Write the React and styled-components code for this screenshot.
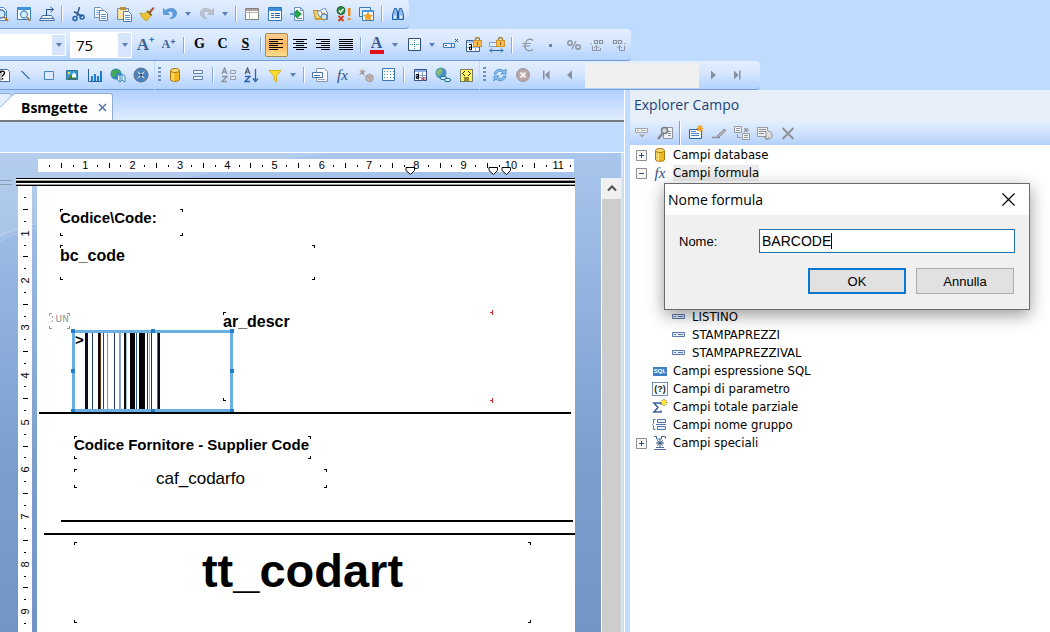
import { Fragment } from 'react'
import styled, { createGlobalStyle } from 'styled-components'

// ---------- icons, all drawn on a 16 x 16 grid ----------

const lock = (
    <>
        <path d="M9.500 4V2.500a2 2 0 0 1 4 0V4" fill="none" stroke="#a87a2a" strokeWidth="1.400" />
        <rect x="7.500" y="3.500" width="8" height="6" fill="#f9bd4f" stroke="#d0922f" />
        <path d="M11 5h1v3h-1z" fill="#8a5a14" />
    </>
)

const spark = <path d="M12 0v7M8.500 3.500h7M9.500 1l5 5M14.500 1l-5 5" stroke="#f0a21c" strokeWidth="1.200" fill="none" />

const lines = (widths) => widths.map((w, i) => (
    <path key={i} d={w} stroke="#000" strokeWidth="1" fill="none" />
))

const glyphs = {
    page: (
        <>
            <path d="M3.500 1.500h7l3 3v10h-10z" fill="#fff" stroke="#4f86c6" />
            <circle cx="8" cy="8" r="4" fill="#cfe8fb" stroke="#4479b4" strokeWidth="1.500" />
            <path d="M11 11l4 4" stroke="#c07c2c" strokeWidth="2" />
        </>
    ),
    preview: (
        <>
            <path d="M1.500 1.500h13v12h-13z" fill="#fff" stroke="#2f7ec4" />
            <path d="M1 1h14v3H1z" fill="#3f93d8" />
            <circle cx="8" cy="8.500" r="3.500" fill="#cdefff" stroke="#5993c6" strokeWidth="1.300" />
            <path d="M11 11l3 4" stroke="#b97a35" strokeWidth="2" />
        </>
    ),
    send: (
        <>
            <path d="M3.500 9.500h9l3 5h-15zM1 12.500h14" fill="#eef5fd" stroke="#4a6f9f" />
            <path d="M7.500 10V3.500H14M11.500 1l3 2.500-3 2.500" fill="none" stroke="#234f8c" />
        </>
    ),
    cut: (
        <>
            <path d="M9.500 1L7 10M4 5.500l8 5" stroke="#33588c" strokeWidth="1.500" fill="none" />
            <circle cx="5" cy="12.500" r="2" fill="none" stroke="#1f5fa8" strokeWidth="1.500" />
            <circle cx="12" cy="11" r="2" fill="none" stroke="#1f5fa8" strokeWidth="1.500" />
        </>
    ),
    copy: (
        <>
            <path d="M1.500 1.500h6l2 2v8h-8z" fill="#fff" stroke="#6f93bf" />
            <path d="M3 4.500h4M3 6.500h4M3 8.500h3" stroke="#8eb0da" />
            <path d="M6.500 4.500h5l3 3v7h-8z" fill="#fff" stroke="#5c83b4" />
            <path d="M8 8.500h5M8 10.500h5M8 12.500h5" stroke="#5d94d0" />
        </>
    ),
    paste: (
        <>
            <path d="M1.500 2.500h11v11h-11z" fill="#f7e3a6" stroke="#6c8db8" />
            <path d="M4 1h6v3H4z" fill="#b8923e" />
            <path d="M7.500 5.500h5l3 3v7h-8z" fill="#fff" stroke="#4b79b0" />
            <path d="M9 9.500h5M9 11.500h5M9 13.500h5" stroke="#5d94d0" />
        </>
    ),
    brush: (
        <>
            <path d="M9.500 6l4.500-5 1.500 1-4 5.500z" fill="#a8572c" />
            <path d="M1 7l4 1 4-3 3.500 3.500L11 11l-3.500 4-4-3z" fill="#f6cf3c" stroke="#b8901d" strokeWidth=".8" />
            <path d="M8 5l4.500 4.500" stroke="#6b5a2c" strokeWidth="1.500" />
            <path d="M4 9.500l4 4M6 8.500l3.500 3.500" stroke="#c49a20" strokeWidth=".8" />
        </>
    ),
    undo: <path d="M1.500 2.500v6h6L5.500 6.500c2-2 5.500-1.500 5.500 1.500 0 2-1 3.500-3 4.500 4 0 6.500-2 6.500-5.500 0-5-7-6-11-2.500z" fill="#5b9fe0" stroke="#3d7fc4" strokeWidth=".6" />,
    redo: <path d="M14.500 2.500v6h-6l2-2C8.500 4.500 5 5 5 8c0 2 1 3.500 3 4.500-4 0-6.500-2-6.500-5.500 0-5 7-6 11-2.500z" fill="#bcc3cc" stroke="#a0a8b3" strokeWidth=".6" />,
    panel: (
        <>
            <path d="M1.500 2.500h13v11h-13z" fill="#fff" stroke="#857f7b" />
            <path d="M2 3h12v2H2z" fill="#a9a4a0" />
            <path d="M5.500 5v9M1 6.500h14" stroke="#bcb8b5" />
        </>
    ),
    form: (
        <>
            <path d="M1.500 1.500h13v13h-13z" fill="#fff" stroke="#2f74ba" />
            <path d="M2 2h12v3H2z" fill="#3d8fd8" />
            <path d="M4 7.500h3M4 9.500h3M4 11.500h3M8 7.500h5M8 9.500h5M8 11.500h5" stroke="#3068b0" />
        </>
    ),
    exporter: (
        <>
            <path d="M4.500 1.500h6l3 3v10h-9z" fill="#fff" stroke="#6a92c2" />
            <path d="M10.500 1.500v3h3M7 12.500h5" stroke="#6a92c2" fill="none" />
            <path d="M7 4l4.500 4L7 12 3.500 8z" fill="#25a746" stroke="#157a30" strokeWidth=".7" />
            <path d="M0 8h5" stroke="#5a9bd8" strokeWidth="2" />
        </>
    ),
    folder: (
        <>
            <path d="M.5 4.500h5l2 2h7v7H2.500z" fill="#f2d26b" stroke="#b58a2c" />
            <path d="M4 6l8-4 3 6-8 3z" fill="#eef6ff" stroke="#6493c9" />
            <path d="M8 5l1 3 3-1" stroke="#d8742c" fill="none" />
            <circle cx="11" cy="11" r="3" fill="#cfe7fa" stroke="#4879b1" />
            <path d="M2 12h8v2H2z" fill="#c99b35" />
        </>
    ),
    checks: (
        <>
            <circle cx="5" cy="4.500" r="4" fill="#2f8d45" stroke="#1e6430" />
            <path d="M3 4.500l1.500 2L7.500 3" stroke="#fff" strokeWidth="1.300" fill="none" />
            <path d="M2.500 10l5 5M7.500 10l-5 5" stroke="#d23a16" strokeWidth="1.800" />
            <path d="M12 2h2.500v8H12zM12 12h2.500v2H12z" fill="#e88a1b" />
        </>
    ),
    favorite: (
        <>
            <path d="M.5 1.500h11v9H.5z" fill="#dcedff" stroke="#3579be" />
            <path d="M3.500 4.500h11v10h-11z" fill="#fff" stroke="#3579be" />
            <path d="M3 4h12v2H3z" fill="#4b97dd" />
            <path d="M9 6l1.300 3 3.200.3-2.400 2 .7 3.200L9 12.800l-2.800 1.700.7-3.200-2.400-2L7.700 9z" fill="#f7a823" stroke="#d27f12" strokeWidth=".6" />
        </>
    ),
    binoculars: (
        <>
            <path d="M4.500 2.500h2l1 4v7h-5V9zM11.500 2.500h-2l-1 4v7h5V9z" fill="#8fbdec" stroke="#1f5fae" />
            <path d="M4 9.500h2v3H4zM10 9.500h2v3h-2z" fill="#e2effc" />
            <path d="M7 6.500h2" stroke="#1d4f92" strokeWidth="2" />
        </>
    ),
    alignLeft: lines(['M0 2.500h14', 'M0 4.500h9', 'M0 6.500h14', 'M0 8.500h9', 'M0 10.500h14', 'M0 12.500h9']),
    alignCenter: lines(['M1 2.500h14', 'M4 4.500h8', 'M1 6.500h14', 'M4 8.500h8', 'M1 10.500h14', 'M4 12.500h8']),
    alignRight: lines(['M1 2.500h14', 'M6 4.500h9', 'M1 6.500h14', 'M6 8.500h9', 'M1 10.500h14', 'M6 12.500h9']),
    justify: lines(['M1 2.500h14', 'M1 4.500h14', 'M1 6.500h14', 'M1 8.500h14', 'M1 10.500h14', 'M1 12.500h14']),
    borders: (
        <>
            <path d="M2.500 1.500h12v12h-12z" fill="#fff" stroke="#2c4c80" />
            <path d="M8.500 3v10M4 7.500h9" stroke="#2f8a9e" strokeDasharray="1 1" />
        </>
    ),
    fieldX: (
        <>
            <path d="M.5 6.500h11v4H.5zM2 8.500h2" fill="#e7f1fd" stroke="#3f7cbd" />
            <path d="M8.500 7v3" stroke="#3f7cbd" />
            <path d="M12 2l3 3M15 2l-3 3" stroke="#244a80" />
        </>
    ),
    lockField: (
        <>
            <path d="M.5 3.500h13v11H.5z" fill="#fff" stroke="#3c5f92" />
            <path d="M5.500 4v10M9.500 4v10M1 10.500h12" stroke="#9db9dc" />
            <path d="M1 4h8v2H1z" fill="#a5c6f0" />
            <path d="M3 7.500h2.500v5H3.500v-2.500h2" fill="none" stroke="#000" />
            {lock}
        </>
    ),
    lockSize: (
        <>
            <path d="M.5 5.500h12v4H.5z" fill="#e1eefd" stroke="#7fa3d2" />
            <path d="M1 13.500h13M3 11.500l-2 2 2 2M12 11.500l2 2-2 2" stroke="#2a66a8" fill="none" />
            {lock}
        </>
    ),
    euro: <path d="M13 3.500C9 .5 5.500 3 5 8s4 7.500 8 4.500M2.500 6.500H11M2.500 9H10" fill="none" stroke="#8c929b" strokeWidth="1.200" />,
    point: <path d="M6 7h3v3H6z" fill="#7d838c" />,
    percent: (
        <>
            <circle cx="4" cy="6" r="2.200" fill="none" stroke="#8c929b" strokeWidth="1.500" />
            <circle cx="12" cy="10" r="2.200" fill="none" stroke="#8c929b" strokeWidth="1.500" />
            <path d="M10 4L6 12" stroke="#8c929b" strokeWidth="1.200" />
        </>
    ),
    decimalAdd: (
        <>
            <path d="M5.500 3.500h3v3h-3zM10.500 3.500h3v3h-3zM2 6v1.500" fill="none" stroke="#8f959e" strokeWidth="1.200" />
            <path d="M3.500 9v4.500h8V11M7.500 13V9M5 11l2.500-2.500L10 11" fill="none" stroke="#8f959e" />
        </>
    ),
    decimalDel: (
        <>
            <path d="M1.500 3.500h3v3h-3zM6.500 3.500h3v3h-3zM13 6v1.500" fill="none" stroke="#8f959e" strokeWidth="1.200" />
            <path d="M12.500 9v4.500h-5V9M5 11l2.500-2.500L10 11" fill="none" stroke="#8f959e" />
        </>
    ),
    textBox: (
        <>
            <path d="M3.500 2.500h9l2 2v10h-11z" fill="#fff" stroke="#4c6da0" />
            <path d="M0 4h6v9H0z" fill="#fff" stroke="#777" />
            <path d="M5.500 6c0-2.500 4-2.500 4 0 0 1.500-2 1.500-2 3.500M7.500 11v1.500" stroke="#000" strokeWidth="1.400" fill="none" />
        </>
    ),
    line: <path d="M3.500 4l8 8" stroke="#3c74b4" strokeWidth="1.300" />,
    box: <path d="M3.500 4.500h9v8h-9z" fill="#deebfd" stroke="#4a86c5" />,
    picture: (
        <>
            <path d="M2.500 3.500h11v9h-11z" fill="#3b9fd0" stroke="#2b6d9c" />
            <path d="M3 12l4-4 3 2 1-1 2 3z" fill="#3f7d38" />
            <path d="M8 7.500l2-2 2 2v3H8z" fill="#fff" />
            <path d="M4 5h2v2H4z" fill="#f4dd4f" />
        </>
    ),
    chart: (
        <>
            <path d="M1.500 2v12.500H15" stroke="#2c5d9b" fill="none" />
            <path d="M4 9h2v5H4zM7 7h2v7H7zM10 9h2v5h-2zM13 4h2v10h-2z" fill="#1f7bd6" />
        </>
    ),
    maps: (
        <>
            <circle cx="6" cy="7" r="5.500" fill="#2f86c4" />
            <path d="M2 4l4-2 2 2-2 4-2 3-3-3zM7 2l4 3-2 2z" fill="#46a85a" />
            <path d="M7.500 7l2.500 2 2-2 3 2v6l-3-2-2 2-2.500-2z" fill="#e8f4fd" stroke="#3c8dc0" />
            <path d="M10 9v6M12 7v6" stroke="#3c8dc0" />
        </>
    ),
    compass: (
        <>
            <circle cx="8" cy="8" r="7" fill="#4583c2" stroke="#5d6f88" />
            <path d="M3 3l5 3.500L13 3l-3.500 5 3.500 5-5-3.500L3 13l3.500-5z" fill="#f0f4f9" stroke="#5b6a7c" strokeWidth=".5" />
            <circle cx="8" cy="8" r="1.500" fill="#2b4f7c" />
        </>
    ),
    database: (
        <>
            <path d="M3.500 3.500v9c0 2.500 9 2.500 9 0v-9z" fill="#f0b921" stroke="#a67710" />
            <path d="M5 5v8M6.500 5v9" stroke="#fae38c" />
            <ellipse cx="8" cy="3.500" rx="4.500" ry="2" fill="#fbdf74" stroke="#a67710" />
        </>
    ),
    group: (
        <>
            <path d="M3.500 3.500h9v3h-9z" fill="#f3f8ff" stroke="#5c81ac" />
            <path d="M3.500 9.500h9v3h-9z" fill="#f3f8ff" stroke="#5c81ac" />
        </>
    ),
    sortGroup: (
        <>
            <path d="M1 7l2.500-6L6 7M2 5h3M1 9.500h5l-5 5h5" fill="none" stroke="#8b929c" strokeWidth="1.300" />
            <path d="M9.500 3.500h5v3h-5zM9.500 9.500h5v3h-5z" fill="#e5ebf3" stroke="#959ca6" />
        </>
    ),
    sort: (
        <>
            <path d="M1 7l2.500-6L6 7M2 5h3" fill="none" stroke="#5d6670" strokeWidth="1.300" />
            <path d="M1 9.500h5l-5 5h5" fill="none" stroke="#2b62a6" strokeWidth="1.300" />
            <path d="M11.500 2v12M9 11.500l2.500 3 2.500-3" fill="none" stroke="#2866b4" strokeWidth="1.300" />
        </>
    ),
    filter: <path d="M2 3.500h12L9.500 9v6L7 13V9z" fill="#fbdc2c" stroke="#d8b424" />,
    fieldPage: (
        <>
            <path d="M4.500 1.500h8l3 3v10h-11z" fill="#f4f8fd" stroke="#8797b4" />
            <path d="M.5 5.500h10v5H.5z" fill="#fff" stroke="#4b72ab" />
            <path d="M2 8.500h6" stroke="#4b72ab" />
            <path d="M6 12.500h7" stroke="#9aa8bf" />
        </>
    ),
    cube: (
        <>
            <path d="M4 1l1 3 3-1-2 3 1 3-3-2-3 1 2-3-2-2 3 .5z" fill="#a69b9d" />
            <path d="M8 9l4-2 3 2v4l-3 2-4-2z" fill="#c6b9b5" stroke="#a3989a" />
            <path d="M8 9l4 1.500L15 9M12 10.500V15" stroke="#a3989a" fill="none" />
        </>
    ),
    gridIcon: (
        <>
            <path d="M1.500 1.500h12v12h-12z" fill="#fff" stroke="#3b77ae" />
            <path d="M3 4.500h10M3 7.500h10M3 10.500h10" stroke="#3f8bb5" strokeDasharray="1 2" />
        </>
    ),
    crossTab: (
        <>
            <path d="M2.500 2.500h12v11h-12z" fill="#fff" stroke="#3a4f86" />
            <path d="M3 3h11v2H3z" fill="#8fb6ec" />
            <path d="M6.500 3v10M10.500 3v10M3 8.500h11M3 10.500h11" stroke="#8da3cb" />
            <path d="M4 7.500h2.500v4H4.500v-2h2" fill="none" stroke="#000" />
            <path d="M9 12h5M11.500 10v4" stroke="#e03b32" />
        </>
    ),
    webLink: (
        <>
            <circle cx="6" cy="6" r="5.500" fill="#4c8fc9" />
            <path d="M1 5l4-4 3 2-3 5-2 1z" fill="#86c06f" />
            <rect x="5.500" y="9.500" width="6" height="3" rx="1.500" fill="#d8f0f7" stroke="#1e6d8c" />
            <rect x="9.500" y="11.500" width="6" height="3" rx="1.500" fill="#d8f0f7" stroke="#1e6d8c" />
        </>
    ),
    highlight: (
        <>
            <path d="M2.500 2.500h12v12h-12z" fill="#fff25c" stroke="#111" strokeDasharray="1 1" />
            <path d="M7 4L4.500 6.500 7 9M10 4l2.500 2.500L10 9M6 11h5M6 13h5" fill="none" stroke="#2c2508" />
        </>
    ),
    refresh: (
        <>
            <path d="M2 7c1-5 7-6 10-3l2-2v5H9l2-1.500C8 3 5 4.500 4.500 7z" fill="#8cc6f2" stroke="#3f87c5" strokeWidth=".8" />
            <path d="M14 9c-1 5-7 6-10 3l-2 2V9h5l-2 1.500C8 13 11 11.500 11.500 9z" fill="#8cc6f2" stroke="#3f87c5" strokeWidth=".8" />
        </>
    ),
    stop: (
        <>
            <circle cx="8" cy="8" r="6.500" fill="#b9a6a6" stroke="#a39293" />
            <path d="M5.500 5.500l5 5M10.500 5.500l-5 5" stroke="#f6f0f0" strokeWidth="2" />
        </>
    ),
    first: <path d="M5 3.500h1.500v9H5zM11.500 3.500v9L7 8z" fill="#8790a0" />,
    prev: <path d="M11 3.500v9L6 8z" fill="#8790a0" />,
    next: <path d="M6 3.500v9L11 8z" fill="#8790a0" />,
    last: <path d="M11 3.500h1.500v9H11zM6 3.500v9l4.500-4.500z" fill="#8790a0" />,
    // explorer panel
    insertField: (
        <>
            <path d="M1.500 3.500h12v4h-12zM3 5.500h2M7 5.500h5" fill="#f1f1f1" stroke="#a0a3a8" />
            <path d="M5 9.500h6l-3 3z" fill="#a0a3a8" />
        </>
    ),
    browse: (
        <>
            <path d="M6.500 2.500h9v11h-9zM11 6.500h3M11 8.500h3M11 10.500h3" fill="#f0f0f0" stroke="#8f9297" />
            <circle cx="7.500" cy="5.500" r="3" fill="#d5d9de" stroke="#777a80" strokeWidth="1.500" />
            <path d="M6 8l-5 6" stroke="#85888d" strokeWidth="2.500" />
        </>
    ),
    newField: (
        <>
            <path d="M1.500 4.500h12v9h-12z" fill="#fff" stroke="#2f62a4" />
            <path d="M3 6.500h5M3 8.500h8M3 10.500h8" stroke="#4682c8" />
            {spark}
        </>
    ),
    edit: (
        <>
            <path d="M7 10l6-6 2 1.500-6 6-3 1z" fill="#b3b5b8" stroke="#8c8f94" />
            <path d="M1 12.500h8" stroke="#8c8f94" strokeWidth="1.500" />
        </>
    ),
    duplicate: (
        <>
            <path d="M.5 1.500h7v6h-7zM2 3.500h4M2 5.500h4" fill="#f2f2f2" stroke="#95989d" />
            <path d="M8.500 8.500h7v6h-7zM10 10.500h4M10 12.500h4" fill="#f2f2f2" stroke="#95989d" />
            <path d="M3.500 9v3.500H7M12 3v4M10 5h5M10 3l4 4M14 3l-4 4" fill="none" stroke="#95989d" />
        </>
    ),
    rename: (
        <>
            <path d="M.5 2.500h10v9H.5z" fill="#ededed" stroke="#95989d" />
            <path d="M2 4.500h7M2 6.500h7M2 8.500h5" stroke="#8e9196" />
            <path d="M9 6v8c4 1 6-1 6-4s-2-4-4-4M7 12l3 3 2-3" fill="#ddd" stroke="#8e9196" />
        </>
    ),
    remove: <path d="M2.500 3l11 11M13.500 3l-11 11" stroke="#8e9196" strokeWidth="1.800" />,
    // tree rows
    field: (
        <>
            <path d="M1.500 5.500h12v4h-12z" fill="#e9f0fb" stroke="#5a79ad" />
            <path d="M3 7.500h2M7 7.500h5" stroke="#5a79ad" />
        </>
    ),
    runningTotal: (
        <>
            <path d="M9 5.500V4H2l4 4.500L2 13h7v-1.500" fill="none" stroke="#3e62a0" strokeWidth="1.600" />
            <path d="M12 0v7M8.500 3.500h7M9.500 1l5 5M14.500 1l-5 5" stroke="#6b6214" />
            <circle cx="12" cy="3.500" r="2.500" fill="#ffe72f" />
        </>
    ),
    groupName: (
        <>
            <path d="M3.500 2.500h-2v4l-1 1 1 1v4h2" fill="none" stroke="#5477ab" />
            <path d="M5.500 2.500h8v3h-8zM5.500 9.500h8v3h-8z" fill="#e9f0fb" stroke="#5477ab" />
            <path d="M4 7.500h10" stroke="#5477ab" />
        </>
    ),
    special: (
        <>
            <path d="M2 1.500h3M4.500 1v3h5V1M9.500 1.500h4v2M2 14.500h12M4 12.500h8" fill="none" stroke="#4c6f9f" />
            <path d="M8 4v8M4 8h8M5 5.500l6 5M11 5.500l-6 5" stroke="#2d527f" />
        </>
    ),
}

function Icon({ name }) {
    return <Glyph viewBox="0 0 16 16" aria-hidden="true">{glyphs[name]}</Glyph>
}

function Caret() {
    return <CaretGlyph viewBox="0 0 6 4" aria-hidden="true"><path d="M0 0h6L3 4z" /></CaretGlyph>
}

// one entry of a toolbar: '|' separator, 'v' drop arrow, string icon, or its own node
function Tools({ items }) {
    return items.map((item, i) => {
        if (item === '|') return <Separator key={i} />
        if (item === 'v') return <DropButton key={i} aria-label="Apri elenco"><Caret /></DropButton>
        if (typeof item === 'string') return <ToolButton key={i} aria-label={item}><Icon name={item} /></ToolButton>
        return <Fragment key={i}>{item}</Fragment>
    })
}

function Toolbars() {
    return (
        <header>
            <BarRow>
                <Bar $shift={-11} $round $end={0}>
                    <Tools items={['page', 'preview', 'send', '|', 'cut', 'copy', 'paste', 'brush', 'undo', 'v', 'redo', 'v', '|',
                        'panel', 'form', 'exporter', 'folder', 'checks', 'favorite', '|', 'binoculars']} />
                </Bar>
            </BarRow>
            <BarRow>
                <Bar $tall $round $end={0}>
                    <Combo $width={66}>
                        <select aria-label="Carattere" defaultValue=""><option value=""></option></select>
                        <ComboArrow><Caret /></ComboArrow>
                    </Combo>
                    <ComboGap />
                    <Combo $width={62} $tall>
                        <select aria-label="Dimensione" defaultValue="75"><option>75</option></select>
                        <ComboArrow><Caret /></ComboArrow>
                    </Combo>
                    <ComboGap $small />
                    <Tools items={[
                        <ToolButton aria-label="Ingrandisci"><SizeLetter $size={17}>A<sup>+</sup></SizeLetter></ToolButton>,
                        <ToolButton aria-label="Riduci"><SizeLetter $size={12}>A<sup>+</sup></SizeLetter></ToolButton>,
                        '|',
                        <ToolButton><StyleLetter as="b">G</StyleLetter></ToolButton>,
                        <ToolButton><StyleLetter as="i">C</StyleLetter></ToolButton>,
                        <ToolButton><StyleLetter as="u">S</StyleLetter></ToolButton>,
                        '|',
                        <ToolButton $active aria-label="Allinea a sinistra"><Icon name="alignLeft" /></ToolButton>,
                        'alignCenter', 'alignRight', 'justify', '|',
                        <ToolButton aria-label="Colore carattere"><ColorLetter>A</ColorLetter></ToolButton>,
                        'v', 'borders', 'v', 'fieldX', 'lockField', 'lockSize', '|',
                        'euro', 'point', 'percent', 'decimalAdd', 'decimalDel',
                    ]} />
                </Bar>
            </BarRow>
            <BarRow>
                <Bar $shift={-9} $end={2}>
                    <Tools items={['textBox', 'line', 'box', 'picture', 'chart', 'maps', 'compass']} />
                </Bar>
                <Bar $end={2}>
                    <Grip />
                    <Tools items={['database', 'group', '|', 'sortGroup', 'sort', 'filter', 'v', '|', 'fieldPage',
                        <ToolButton aria-label="Formula"><Fx>fx</Fx></ToolButton>,
                        'cube', 'gridIcon', '|', 'crossTab', 'webLink', 'highlight']} />
                </Bar>
                <Bar $round $end={13}>
                    <Grip />
                    <Tools items={['refresh', 'stop', 'first', 'prev']} />
                    <PageBox aria-label="Pagina" readOnly />
                    <Tools items={['next', 'last']} />
                </Bar>
            </BarRow>
        </header>
    )
}

function Ruler({ vertical, count }) {
    return (
        <RulerTrack $vertical={vertical} $count={count}>
            {Array.from({ length: count }, (_, i) => {
                const n = i + 1
                if (n % 4 === 0) return <RulerNumber key={n} $vertical={vertical}>{n / 4}</RulerNumber>
                return <RulerTick key={n} $vertical={vertical} $long={n % 4 === 2} />
            })}
        </RulerTrack>
    )
}

// [x, width, colour]
const bars = [
    [0, 3, '#0c0c1e'], [7, 1, '#27406b'], [13, 2, '#140606'], [15, 1, '#5a2f20'], [18, 1, '#2f3f63'], [22, 1, '#6d9ac4'],
    [29, 1, '#22355c'], [34, 1, '#c09868'], [35, 1, '#8ba9cc'], [39, 2, '#140c08'], [41, 1, '#a8c4dc'], [45, 5, '#050308'], [51, 1, '#2a5c80'],
    [54, 6, '#050308'], [62, 1, '#1b2f52'], [64, 1, '#9fb4c4'], [66, 1, '#3c2c40'], [72, 1, '#8a5a30'], [73, 2, '#06081a'],
]

const pins = [372, 455, 468]

const corners = ['tl', 'tr', 'bl', 'br']

function Field({ at, show = corners, children, ...rest }) {
    return (
        <FieldBox $at={at} {...rest}>
            {show.map(c => <Corner key={c} $side={c} />)}
            {children}
        </FieldBox>
    )
}

function Report() {
    return (
        <Paper>
            <Field at={[23, 23, 123, 27]}>Codice\Code:</Field>
            <Field at={[23, 59, 255, 35]} $size={16} $pad={2}>bc_code</Field>
            <Field at={[12, 127, 21, 16]} $muted>:UN</Field>
            <Field at={[186, 126, 269, 89]} $size={16} $pad={1} show={['tl', 'bl']}>
                ar_descr
                <RedMark $top /><RedMark />
            </Field>

            <Selection>
                <Start>&gt;</Start>
                <svg width="75" height="76" aria-hidden="true" shapeRendering="crispEdges">
                    {bars.map(([x, w, color]) => <rect key={x} x={x} width={w} height="76" fill={color} />)}
                </svg>
                {[0, 50, 100].map(x => [0, 50, 100].map(y => (
                    x === 50 && y === 50 ? null : <Handle key={`${x}-${y}`} $x={x} $y={y} />
                )))}
            </Selection>

            <Rule $at={[2, 226, 532]} />
            <Field at={[37, 250, 237, 23]}>Codice Fornitore - Supplier Code</Field>
            <Field at={[37, 283, 253, 19]} $size={17} $weight={400} $center>caf_codarfo</Field>
            <Rule $at={[24, 334, 512]} />
            <Rule $at={[7, 347, 531]} />
            <Field at={[37, 356, 457, 81]} $size={47} $center $pad={1}>tt_codart</Field>
        </Paper>
    )
}

function Designer() {
    return (
        <DesignerPane>
            <TabStrip>
                <TabEdge width="15" height="27" viewBox="0 0 15 27" aria-hidden="true">
                    <path d="M0 1h9l3 2v24H0z" fill="#e3eefd" />
                    <path d="M0 .5h9l3 2" fill="none" stroke="#90add3" />
                    <path d="M0 14.500L13 1.500l2-1.500v27H0z" fill="#fff" />
                    <path d="M0 14.500L12.500 2l2.500-1.500" fill="none" stroke="#90add3" />
                </TabEdge>
                <Tab>
                    Bsmgette
                    <TabClose aria-label="Chiudi">
                        <svg width="9" height="9" viewBox="0 0 9 9"><path d="M1 1l7 7M8 1l-7 7" stroke="#5174a8" strokeWidth="1.500" /></svg>
                    </TabClose>
                </Tab>
            </TabStrip>
            <SubBand />
            <Workspace>
                <Swoosh viewBox="0 0 622 480" preserveAspectRatio="none" aria-hidden="true">
                    <path d="M0 0h330C220 14 90 42 0 86z" fill="#fff" opacity=".14" />
                    <path d="M0 82Q20 74 40 70M0 88Q18 78 40 74" stroke="#cfe0f5" fill="none" opacity=".5" />
                </Swoosh>
                <TopRuler>
                    <Ruler count={45} />
                    {pins.map(x => (
                        <Pin key={x} $x={x} viewBox="0 0 11 9" aria-hidden="true">
                            <path d="M1 1.500h8.500v3l-4 4-4.500-4z" fill="#fff" stroke="#000" />
                        </Pin>
                    ))}
                </TopRuler>
                <Scroller>
                    <Sheet>
                        <SectionTop><SectionMark /><SectionRule /></SectionTop>
                        <SheetBody>
                            <SideRuler><Ruler vertical count={38} /></SideRuler>
                            <Report />
                        </SheetBody>
                    </Sheet>
                    <Scrollbar>
                        <ScrollUp aria-label="Scorri in alto">
                            <svg width="10" height="7" viewBox="0 0 10 7"><path d="M1 5.500l4-4 4 4" fill="none" stroke="#505050" strokeWidth="2" /></svg>
                        </ScrollUp>
                    </Scrollbar>
                </Scroller>
            </Workspace>
        </DesignerPane>
    )
}

function Expander({ open }) {
    return (
        <ExpandButton aria-label={open ? 'Comprimi' : 'Espandi'}>
            <svg width="11" height="11" viewBox="0 0 11 11">
                <path d="M.5.5h10v10H.5z" fill="#f7f7f7" stroke="#8f8f8f" />
                <path d={open ? 'M3 5.500h5' : 'M3 5.500h5M5.500 3v5'} stroke="#2e4a80" />
            </svg>
        </ExpandButton>
    )
}

function SqlBadge() {
    return <Badge>SQL</Badge>
}

function ParamBadge() {
    return <Badge $framed>(?)</Badge>
}

const formulas = ['LISTINO', 'STAMPAPREZZI', 'STAMPAPREZZIVAL']

const groups = [
    { label: 'Campi espressione SQL', icon: <SqlBadge /> },
    { label: 'Campi di parametro', icon: <ParamBadge /> },
    { label: 'Campi totale parziale', icon: <Icon name="runningTotal" /> },
    { label: 'Campi nome gruppo', icon: <Icon name="groupName" /> },
    { label: 'Campi speciali', icon: <Icon name="special" />, closed: true },
]

function FieldExplorer() {
    return (
        <ExplorerPane>
            <ExplorerTitle>Explorer Campo</ExplorerTitle>
            <ExplorerBar>
                <Tools items={['insertField', 'browse', '|', 'newField', 'edit', 'duplicate', 'rename', 'remove']} />
            </ExplorerBar>
            <Tree>
                <TreeRow>
                    <Expander />
                    <TreeIcon><Icon name="database" /></TreeIcon>
                    <span>Campi database</span>
                </TreeRow>
                <TreeRow>
                    <Expander open />
                    <TreeIcon><Fx>fx</Fx></TreeIcon>
                    <Selected>Campi formula</Selected>
                </TreeRow>
                <Children>
                    {formulas.map(name => (
                        <TreeRow key={name} $child>
                            <TreeIcon><Icon name="field" /></TreeIcon>
                            <span>{name}</span>
                        </TreeRow>
                    ))}
                </Children>
                {groups.map(({ label, icon, closed }) => (
                    <TreeRow key={label}>
                        {closed ? <Expander /> : <ExpandSpace />}
                        <TreeIcon>{icon}</TreeIcon>
                        <span>{label}</span>
                    </TreeRow>
                ))}
            </Tree>
            <FormulaDialog />
        </ExplorerPane>
    )
}

function FormulaDialog() {
    return (
        <Dialog role="dialog" aria-labelledby="dialog-title">
            <DialogTitle>
                <span id="dialog-title">Nome formula</span>
                <CloseButton aria-label="Chiudi">
                    <svg width="13" height="13" viewBox="0 0 13 13"><path d="M.5.5l12 12M12.500.5l-12 12" stroke="#000" strokeWidth="1.200" /></svg>
                </CloseButton>
            </DialogTitle>
            <DialogBody>
                <label htmlFor="formula-name">Nome:</label>
                <NameBox>
                    <input id="formula-name" defaultValue="BARCODE" />
                    <TextCaret />
                </NameBox>
                <Actions>
                    <DialogButton $primary>OK</DialogButton>
                    <DialogButton>Annulla</DialogButton>
                </Actions>
            </DialogBody>
        </Dialog>
    )
}

export default function App() {
    return (
        <Window>
            <GlobalStyle />
            <Toolbars />
            <Main>
                <Designer />
                <Splitter />
                <FieldExplorer />
            </Main>
        </Window>
    )
}

const GlobalStyle = createGlobalStyle`
    *{
        box-sizing: border-box;
    }

    body{
        margin: 0;
        overflow: hidden;
        font-family: "Open Sans", sans-serif;
        color: #000;
    }

    button, input, select{
        margin: 0;
        padding: 0;
        border: 0;
        border-radius: 0;
        background: none;
        font: inherit;
        color: inherit;
        outline: none;
    }
`

const Window = styled.div`
    display: flex;
    flex-direction: column;
    height: 100vh;
    background: #bfdbff;
`

// ---------- toolbars ----------

const BarRow = styled.div`
    display: flex;
    gap: 1px;
`

const Bar = styled.div`
    display: flex;
    align-items: center;
    flex: none;
    height: ${p => p.$tall ? 32 : 29}px;
    margin-left: ${p => p.$shift || 0}px;
    padding-right: ${p => p.$end}px;
    border-bottom: 1px solid #6f9dd9;
    border-radius: ${p => p.$round ? '0 4px 4px 0' : 0};
    background: linear-gradient(#e3efff, #d6e6fe 45%, #c0daff 75%, #b6d4fd);
`

const ToolButton = styled.button`
    display: flex;
    align-items: center;
    justify-content: center;
    flex: none;
    width: 23px;
    height: 24px;
    ${p => p.$active && `
        border: 1px solid #a98a55;
        border-radius: 2px;
        background: linear-gradient(#fbcf95, #fdb45c 50%, #fee08e);
    `}
`

const DropButton = styled(ToolButton)`
    width: 14px;
`

const Glyph = styled.svg`
    display: block;
    flex: none;
    width: 16px;
    height: 16px;
`

const CaretGlyph = styled.svg`
    width: 6px;
    height: 4px;
    fill: #5b7fb8;
`

const Separator = styled.span`
    flex: none;
    width: 2px;
    height: 16px;
    margin: 0 3px;
    border-left: 1px solid #88abdb;
    border-right: 1px solid #fff;
`

const Grip = styled.span`
    flex: none;
    width: 3px;
    height: 16px;
    margin: 0 2px 0 3px;
    background: repeating-linear-gradient(#6f94c8 0 2px, transparent 2px 4px);
`

const Combo = styled.div`
    display: flex;
    flex: none;
    width: ${p => p.$width}px;
    height: ${p => p.$tall ? 26 : 22}px;
    border: 1px solid #fff;
    background: #fff;

    select{
        flex: 1;
        min-width: 0;
        padding-left: 5px;
        appearance: none;
        font-size: 15px;
    }
`

const ComboArrow = styled.span`
    display: flex;
    align-items: center;
    justify-content: center;
    width: 13px;
    background: #d6e5fb;
    pointer-events: none;
`

const ComboGap = styled.span`
    width: ${p => p.$small ? 2 : 4}px;
`

const SizeLetter = styled.span`
    display: flex;
    font: bold ${p => p.$size}px "Liberation Serif", serif;
    color: #3f5e92;

    sup{
        font: bold 9px "Liberation Sans", sans-serif;
        color: #2a6fb8;
    }
`

const StyleLetter = styled.span`
    padding-bottom: 2px;
    font: bold 14px "Liberation Serif", serif;
`

const ColorLetter = styled.span`
    width: 14px;
    border-bottom: 4px solid #e3101c;
    font: bold 16px/14px "Liberation Serif", serif;
    color: #38588e;
`

const Fx = styled.span`
    font: italic 15px/16px "Liberation Serif", serif;
    color: #2f5088;
`

const PageBox = styled.input`
    width: 114px;
    height: 25px;
    margin: 0 2px 0 5px;
    background: #f0f0f0;
`

// ---------- designer ----------

const Main = styled.main`
    display: grid;
    grid-template-columns: minmax(0, 1fr) 5px 420px;
    flex: 1;
    min-height: 0;
`

const DesignerPane = styled.section`
    display: flex;
    flex-direction: column;
    min-height: 0;
    border-right: 1px solid #fff;
`

const TabStrip = styled.div`
    display: flex;
    flex: none;
    height: 32px;
    padding-top: 3px;
    border-bottom: 2px solid #75797f;
    background: linear-gradient(#afcffd, #dfecff);
`

const TabEdge = styled.svg`
    flex: none;
`

const Tab = styled.div`
    display: flex;
    align-items: center;
    gap: 10px;
    padding: 0 3px 0 6px;
    border-top: 1px solid #90add3;
    border-right: 1px solid #90add3;
    border-radius: 0 3px 0 0;
    background: #fff;
    font-size: 14px;
    font-weight: 700;
`

const TabClose = styled.button`
    display: flex;
    align-items: center;
    width: 11px;
    height: 20px;
`

const SubBand = styled.div`
    flex: none;
    height: 31px;
    border-bottom: 1px solid #fff;
`

const Workspace = styled.div`
    position: relative;
    display: flex;
    flex-direction: column;
    flex: 1;
    min-height: 0;
    margin-right: 1px;
    padding-top: 6px;
    border-right: 2px solid #d5e4f6;
    background: linear-gradient(#a9c6ec, #8fb0dd 35%, #7c9ecd 65%, #7395c6);
`

const Swoosh = styled.svg`
    position: absolute;
    inset: 0;
    width: 100%;
    height: 100%;
`

const TopRuler = styled.div`
    position: relative;
    flex: none;
    width: 536px;
    height: 13px;
    margin-left: 38px;
    background: #fff;
`

const SideRuler = styled.div`
    position: relative;
    flex: none;
    width: 14px;
    background: #fff;
`

// ticks sit in the middle of equal cells, four to a centimetre
const RulerTrack = styled.div`
    display: grid;
    ${p => p.$vertical ? `
        grid-template-rows: repeat(${p.$count}, 1fr);
        width: 14px;
        height: 449px;
        padding-top: 6px;
        box-sizing: content-box;
    ` : `
        grid-template-columns: repeat(${p.$count}, 1fr);
        width: 532px;
        height: 13px;
        margin-left: 6px;
    `}
    place-items: center;
`

const RulerNumber = styled.span`
    display: flex;
    align-items: center;
    justify-content: center;
    width: 11px;
    height: 11px;
    font: 11px/11px "Liberation Sans", sans-serif;
    ${p => p.$vertical && 'transform: rotate(-90deg);'}
`

const RulerTick = styled.span`
    background: #000;
    width: ${p => p.$vertical && p.$long ? 5 : p.$vertical ? 2 : 1}px;
    height: ${p => !p.$vertical && p.$long ? 5 : p.$vertical ? 1 : 2}px;
`

const Pin = styled.svg`
    position: absolute;
    left: ${p => p.$x - 5}px;
    top: 7px;
    width: 11px;
    height: 9px;
`

const Scroller = styled.div`
    position: relative;
    display: flex;
    justify-content: space-between;
    flex: 1;
    min-height: 0;
    margin-top: 6px;
    overflow: hidden;
`

const Sheet = styled.div`
    display: flex;
    flex-direction: column;
    width: 575px;
`

const SectionTop = styled.div`
    display: flex;
    justify-content: space-between;
    flex: none;
    height: 8px;
`

const SectionMark = styled.span`
    width: 12px;
    height: 5px;
    margin-top: 2px;
    border-top: 1px solid #8d9cb3;
    border-bottom: 1px solid #8d9cb3;
`

const SectionRule = styled.span`
    width: 559px;
    background: linear-gradient(#000 0 1px, #fff 1px 2px, #999 2px 3px, #000 3px 5px, #fff 5px 6px, #999 6px 7px, #000 7px);
`

const SheetBody = styled.div`
    display: flex;
    gap: 5px;
    flex: 1;
    min-height: 0;
    padding-left: 18px;
`

const Scrollbar = styled.div`
    width: 20px;
    border-left: 1px solid #fff;
    background: #cdcdcd;
`

const ScrollUp = styled.button`
    display: flex;
    align-items: center;
    justify-content: center;
    width: 100%;
    height: 21px;
    background: #f0f0f0;
`

const Splitter = styled.div`
    background: #bfdbff;
`

// ---------- report canvas ----------

const Paper = styled.div`
    position: relative;
    flex: 1;
    overflow: hidden;
    background: #fff;
    font-family: "Liberation Sans", Arial, sans-serif;
`

const FieldBox = styled.div`
    position: absolute;
    left: ${p => p.$at[0]}px;
    top: ${p => p.$at[1]}px;
    width: ${p => p.$at[2]}px;
    height: ${p => p.$at[3]}px;
    padding-top: ${p => p.$pad || 0}px;
    font-size: ${p => p.$size || 15}px;
    font-weight: ${p => p.$weight || 700};
    line-height: normal;
    text-align: ${p => p.$center ? 'center' : 'left'};
    white-space: nowrap;
    color: #000;
    ${p => p.$muted && `
        font: 11px/12px "Liberation Mono", monospace;
        color: #999;
    `}
`

const Corner = styled.i`
    position: absolute;
    width: 3px;
    height: 3px;
    ${p => p.$side[0] === 't' ? 'top: 0; border-top: 1px solid;' : 'bottom: 0; border-bottom: 1px solid;'}
    ${p => p.$side[1] === 'l' ? 'left: 0; border-left: 1px solid;' : 'right: 0; border-right: 1px solid;'}
`

const RedMark = styled.i`
    position: absolute;
    right: -1px;
    ${p => p.$top ? 'top: -2px;' : 'bottom: -2px;'}
    width: 3px;
    height: 5px;
    border-right: 1px solid #c22a2a;
    background: linear-gradient(transparent 2px, #c22a2a 2px 3px, transparent 3px);
`

const Rule = styled.div`
    position: absolute;
    left: ${p => p.$at[0]}px;
    top: ${p => p.$at[1]}px;
    width: ${p => p.$at[2]}px;
    height: 2px;
    background: #000;
`

const Selection = styled.div`
    position: absolute;
    left: 35px;
    top: 144px;
    display: flex;
    width: 161px;
    height: 82px;
    border: 3px solid #6aaee2;
`

const Start = styled.b`
    width: 10px;
    font-size: 15px;
    line-height: 14px;
`

// handles straddle the border of the selection
const Handle = styled.i`
    position: absolute;
    left: calc(${p => p.$x}% + ${p => p.$x / 25 - 4}px);
    top: calc(${p => p.$y}% + ${p => p.$y / 25 - 4}px);
    width: 4px;
    height: 4px;
    background: #1f7fcc;
`

// ---------- explorer ----------

const ExplorerPane = styled.section`
    position: relative;
    display: flex;
    flex-direction: column;
    min-width: 0;
    background: #fff;
`

const ExplorerTitle = styled.h2`
    height: 31px;
    margin: 0;
    padding-left: 4px;
    background: #e6eef7;
    font-size: 14px;
    font-weight: 400;
    line-height: 29px;
    color: #1e4278;
`

const ExplorerBar = styled.div`
    display: flex;
    align-items: center;
    height: 24px;
    background: linear-gradient(#e3efff, #cfe1fc 50%, #b3d1fb);

    ${Separator}{
        height: 24px;
        border-left-color: #8d9bb0;
    }
`

const Tree = styled.div`
    padding-top: 1px;
    font-family: "DejaVu Sans Condensed", "Noto Sans", sans-serif;
    font-size: 13px;
    line-height: 16px;
`

const TreeRow = styled.div`
    display: flex;
    align-items: center;
    height: 18px;
    padding-left: ${p => p.$child ? 36 : 6}px;
`

const Children = styled.div`
    display: flex;
    flex-direction: column;
    justify-content: flex-end;
    height: 180px;
`

const TreeIcon = styled.span`
    display: flex;
    justify-content: center;
    width: 16px;
    margin: 0 5px;
`

const Selected = styled.span`
    background: #ececec;
`

const ExpandButton = styled.button`
    display: flex;
    width: 11px;
`

const ExpandSpace = styled.span`
    width: 11px;
`

const Badge = styled.span`
    flex: none;
    width: ${p => p.$framed ? 16 : 14}px;
    height: ${p => p.$framed ? 14 : 9}px;
    border: ${p => p.$framed ? '1px solid #6f8fb5' : 0};
    background: ${p => p.$framed ? '#fff' : '#3f7fc4'};
    font: bold ${p => p.$framed ? 9 : 6}px/${p => p.$framed ? 12 : 9}px "Liberation Sans", sans-serif;
    text-align: center;
    color: ${p => p.$framed ? '#222' : '#fff'};
`

// ---------- dialog ----------

const Dialog = styled.div`
    position: absolute;
    top: 93px;
    right: 20px;
    width: 366px;
    border: 1px solid #6b6b6b;
    background: #f0f0f0;
    box-shadow: 0 5px 16px rgba(0, 0, 0, 0.4);
`

const DialogTitle = styled.div`
    display: flex;
    justify-content: space-between;
    align-items: center;
    height: 31px;
    padding: 0 14px 0 3px;
    background: #fff;
    font-size: 14px;
`

const CloseButton = styled.button`
    display: flex;
`

const DialogBody = styled.div`
    display: grid;
    grid-template-columns: 80px 1fr;
    align-items: center;
    row-gap: 15px;
    padding: 14px 14px 15px;
    font: 13px "Liberation Sans", Arial, sans-serif;
`

const NameBox = styled.div`
    display: flex;
    height: 24px;
    padding: 3px 2px 4px;
    border: 1px solid #2672b0;
    background: #fff;
    font-size: 14px;

    input{
        field-sizing: content;
        height: 15px;
    }
`

const TextCaret = styled.i`
    width: 1px;
    height: 16px;
    background: #000;
`

const Actions = styled.div`
    display: flex;
    justify-content: flex-end;
    gap: 10px;
    grid-column: 1 / -1;
    padding-right: 1px;
`

const DialogButton = styled.button`
    width: 98px;
    height: 26px;
    border: ${p => p.$primary ? '2px solid #0b78d0' : '1px solid #adadad'};
    background: #e1e1e1;
`
